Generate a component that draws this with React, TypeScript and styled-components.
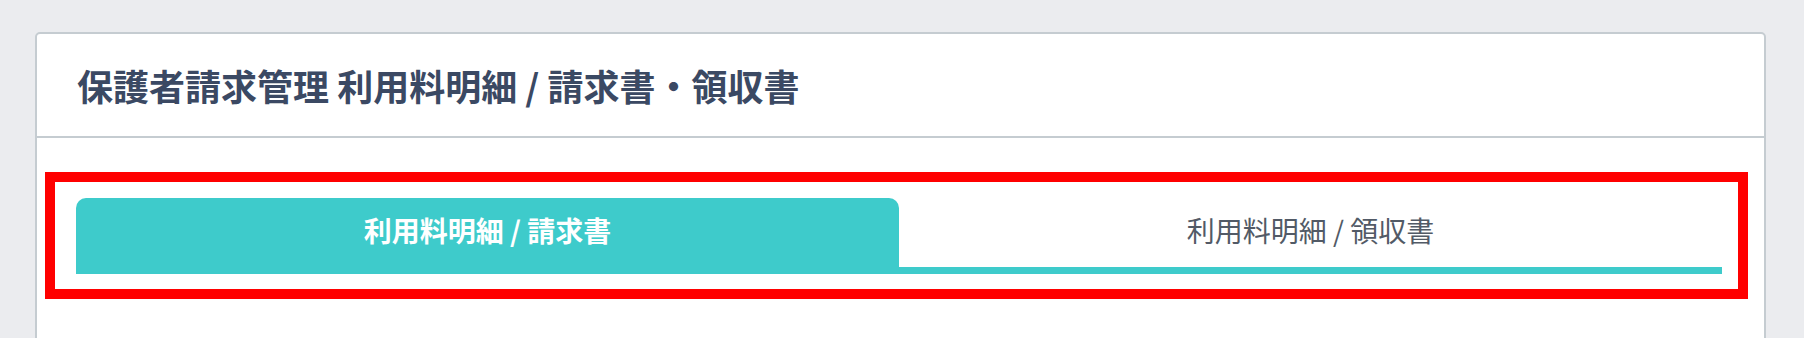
import styled, { createGlobalStyle } from 'styled-components';

const GlobalStyle = createGlobalStyle`
  html, body {
    margin: 0;
    padding: 0;
    background: #ebecef;
    overflow: hidden;
    font-family: "Noto Sans CJK JP", "Noto Sans", sans-serif;
  }
`;

interface TabProps {
  $active?: boolean
}

const tabs = ['利用料明細 / 請求書', '利用料明細 / 領収書'];

function App() {
  return (
    <>
      <GlobalStyle />
      <Page>
        <Card>
          <Header>
            <Title>保護者請求管理 利用料明細 / 請求書・領収書</Title>
          </Header>
          <Body>
            <Highlight>
              <TabList>
                {tabs.map((label, i) => (
                  <Tab key={label} $active={i === 0}>{label}</Tab>
                ))}
              </TabList>
            </Highlight>
          </Body>
        </Card>
      </Page>
    </>
  );
}

export default App;

const Page = styled.div`
  padding: 32px 38px 0 35px;
`;

const Card = styled.div`
  background: #fff;
  border: 2px solid #c5ccd1;
  border-radius: 5px;
  min-height: 400px;
`;

const Header = styled.div`
  height: 102px;
  display: flex;
  align-items: center;
  padding-left: 40px;
  border-bottom: 2px solid #c5ccd1;
`;

const Title = styled.h1`
  margin: 0;
  font-size: 36px;
  font-weight: 700;
  color: #3b4963;
`;

const Body = styled.div`
  padding: 34px 16px 0 8px;
`;

const Highlight = styled.div`
  border: 10px solid #ff0000;
  padding: 16px 16px 15px 21px;
`;

const TabList = styled.div`
  display: grid;
  grid-template-columns: 1fr 1fr;
`;

const Tab = styled.div<TabProps>`
  height: 76px;
  box-sizing: border-box;
  display: flex;
  align-items: center;
  justify-content: center;
  font-size: 28px;
  font-weight: ${props => (props.$active ? 700 : 400)};
  color: ${props => (props.$active ? '#ffffff' : '#525a66')};
  background: ${props => (props.$active ? '#3ecbcb' : 'transparent')};
  border-radius: ${props => (props.$active ? '10px 10px 0 0' : '0')};
  border-bottom: ${props => (props.$active ? 'none' : '7px solid #3ecbcb')};
  padding-bottom: ${props => (props.$active ? '12px' : '5px')};
`;
